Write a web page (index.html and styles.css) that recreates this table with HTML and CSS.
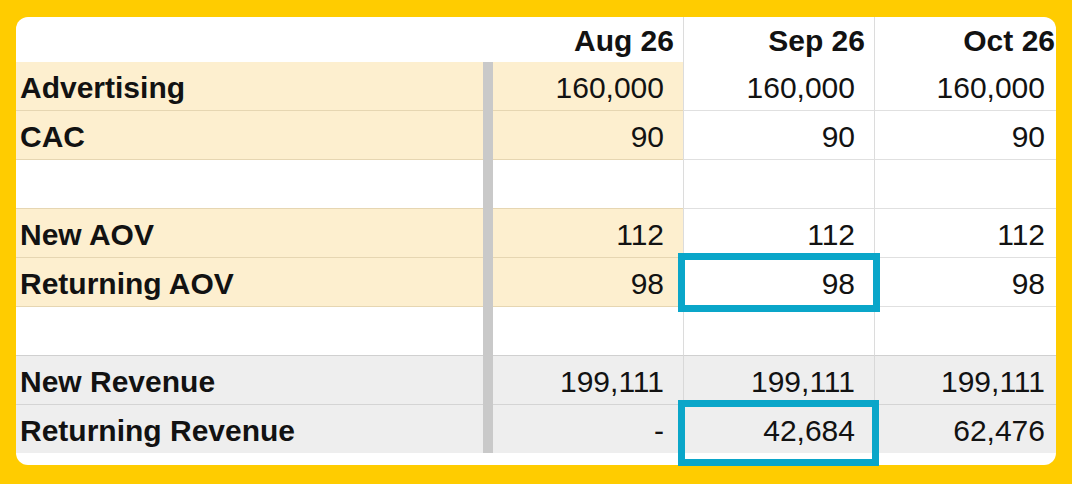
FILE: index.html
```html
<!DOCTYPE html>
<html lang="en">
<head>
<meta charset="utf-8">
<title>Revenue model</title>
<link rel="stylesheet" href="styles.css">
</head>
<body>
<div class="stage">
  <div class="card">
    <div class="row head">
      <div class="cell label"></div>
      <div class="cell sep"></div>
      <div class="cell num aug">Aug 26</div>
      <div class="cell num col">Sep 26</div>
      <div class="cell num col">Oct 26</div>
    </div>
    <div class="row beige">
      <div class="cell label">Advertising</div>
      <div class="cell sep"></div>
      <div class="cell num aug">160,000</div>
      <div class="cell num col">160,000</div>
      <div class="cell num col">160,000</div>
    </div>
    <div class="row beige">
      <div class="cell label">CAC</div>
      <div class="cell sep"></div>
      <div class="cell num aug">90</div>
      <div class="cell num col">90</div>
      <div class="cell num col">90</div>
    </div>
    <div class="row blank before-beige">
      <div class="cell label"></div>
      <div class="cell sep"></div>
      <div class="cell num aug"></div>
      <div class="cell num col"></div>
      <div class="cell num col"></div>
    </div>
    <div class="row beige">
      <div class="cell label">New AOV</div>
      <div class="cell sep"></div>
      <div class="cell num aug">112</div>
      <div class="cell num col">112</div>
      <div class="cell num col">112</div>
    </div>
    <div class="row beige">
      <div class="cell label">Returning AOV</div>
      <div class="cell sep"></div>
      <div class="cell num aug">98</div>
      <div class="cell num col">98</div>
      <div class="cell num col">98</div>
    </div>
    <div class="row blank before-grey">
      <div class="cell label"></div>
      <div class="cell sep"></div>
      <div class="cell num aug"></div>
      <div class="cell num col"></div>
      <div class="cell num col"></div>
    </div>
    <div class="row grey">
      <div class="cell label">New Revenue</div>
      <div class="cell sep"></div>
      <div class="cell num aug">199,111</div>
      <div class="cell num col">199,111</div>
      <div class="cell num col">199,111</div>
    </div>
    <div class="row grey last">
      <div class="cell label">Returning Revenue</div>
      <div class="cell sep"></div>
      <div class="cell num aug">-</div>
      <div class="cell num col">42,684</div>
      <div class="cell num col">62,476</div>
    </div>
  </div>
  <div class="highlight hl-aov"></div>
  <div class="highlight hl-rev"></div>
</div>
</body>
</html>
```

FILE: styles.css
```css
html, body {
  margin: 0;
  padding: 0;
}

body {
  background: #ffcc00;
  width: 1072px;
  height: 484px;
  overflow: hidden;
  font-family: "Liberation Sans", Arial, sans-serif;
  color: #121212;
}

.stage {
  position: relative;
  width: 1072px;
  height: 484px;
  padding: 17px 16px 19px 16px;
  box-sizing: border-box;
}

.card {
  width: 1040px;
  height: 448px;
  background: #ffffff;
  border-radius: 12px;
  overflow: hidden;
}

.row {
  display: grid;
  grid-template-columns: 467px 10px 190px 191px 190px;
  height: 49px;
  width: 1048px;
}

.row.head {
  height: 45px;
}

.cell {
  display: flex;
  align-items: center;
  font-size: 30px;
  line-height: 1;
  box-sizing: border-box;
  white-space: nowrap;
  border-bottom: 1px solid #e0e0e0;
  padding-top: 4px;
}

.label {
  font-weight: bold;
  padding-left: 4px;
}

.num {
  justify-content: flex-end;
  padding-right: 19px;
}

.col {
  border-left: 1px solid #dcdcdc;
}

.sep {
  background: #c9c9c9;
  border-bottom: none;
}

/* header */
.head .cell {
  border-bottom: none;
  font-weight: bold;
  padding-right: 9px;
  padding-top: 3px;
}

.head .sep {
  background: #ffffff;
}

/* beige input rows */
.beige .label,
.beige .aug {
  background: #fdefcf;
  border-bottom-color: #e6d6b2;
}

.before-beige .label,
.before-beige .aug {
  border-bottom-color: #e6d6b2;
}

.before-grey .cell {
  border-bottom-color: #d0d0d0;
}

.before-grey .sep {
  border-bottom: none;
}

/* grey output rows */
.grey .cell {
  background: #eeeeee;
  border-bottom-color: #d4d4d4;
}

.grey .sep {
  background: #c9c9c9;
}

.grey .col {
  border-left-color: #d8d8d8;
}

.grey.last .cell {
  border-bottom: none;
  height: 48px;
}

.highlight {
  position: absolute;
  border: 7px solid #0aa6c9;
  box-sizing: border-box;
}

.hl-aov {
  left: 678px;
  top: 253px;
  width: 202px;
  height: 59px;
}

.hl-rev {
  left: 678px;
  top: 400px;
  width: 201px;
  height: 66px;
}
```
